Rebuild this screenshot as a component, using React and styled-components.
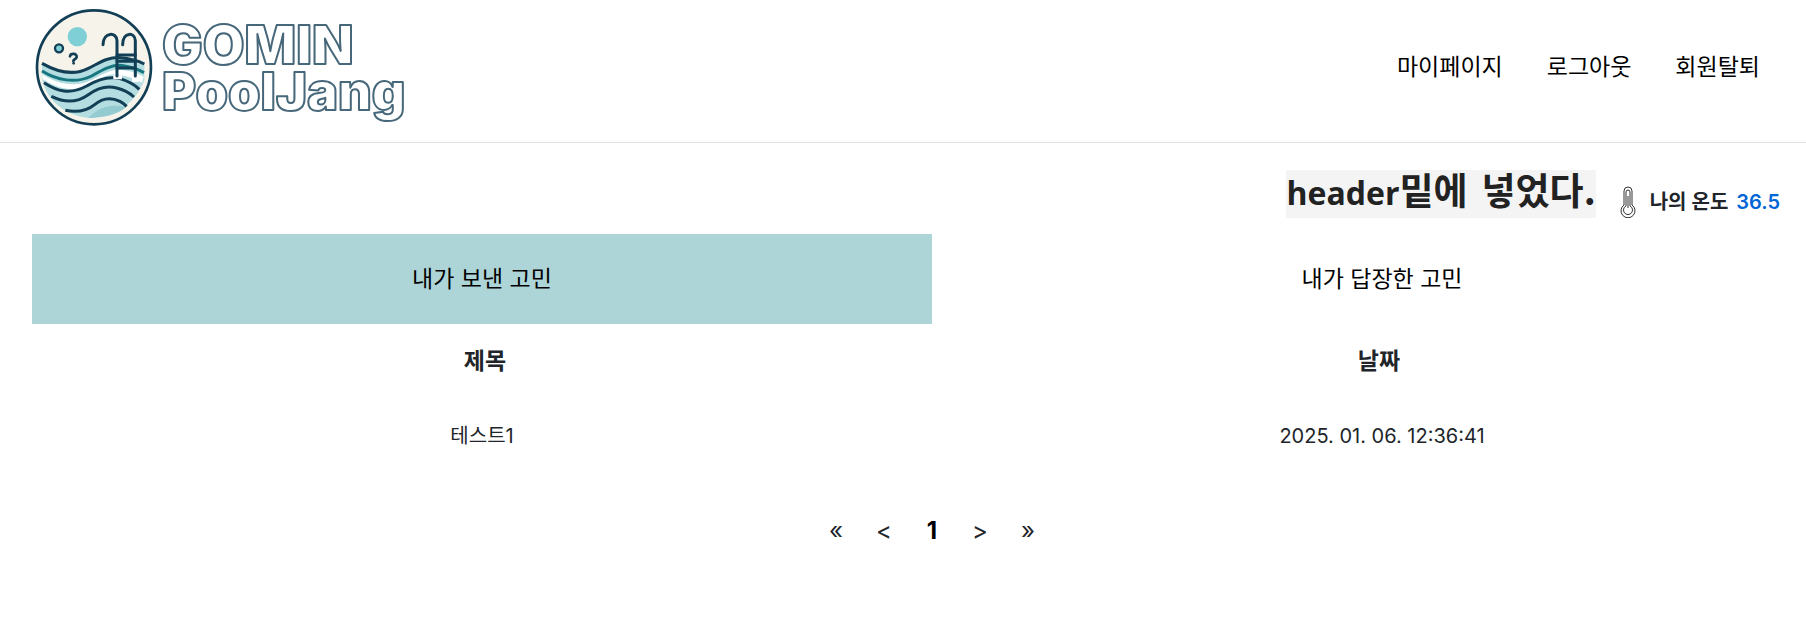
import React, { useState } from "react";
import styled, { createGlobalStyle } from "styled-components";

const colors = {
    navy: "#123f55",
    outline: "#47687a",
    teal: "#7fd0d6",
    paleTeal: "#b3dde0",
    cream: "#f6f3ea",
    tab: "#add5d7",
    text: "#212529",
    blue: "#0066d6",
    line: "#dee2e6",
};

const worries = [{ id: 1, title: "테스트1", date: "2025. 01. 06. 12:36:41" }];

const Logo = () => (
    <LogoSvg viewBox="32 8 390 126" role="img" aria-label="GOMIN PoolJang">
        <g transform="translate(20 0) scale(0.3333)" fill="none" strokeLinecap="round">
            <circle cx="222" cy="202" r="171" fill={colors.cream} stroke={colors.navy} strokeWidth="8" />
            <path
                d="M66 190C110 215 160 228 205 205C240 188 262 171 300 173C330 175 355 182 373 192L373 240C350 300 300 350 205 354C130 345 80 300 66 235Z"
                fill={colors.paleTeal}
            />
            <path
                d="M66 222C110 252 165 264 215 240C250 220 280 205 310 210C340 215 355 221 371 230L366 248C340 234 300 220 270 224C230 234 200 268 160 268C120 268 90 250 68 238Z"
                fill="#fff"
            />
            <path d="M205 354C225 335 240 322 275 318C295 316 310 320 318 322C290 345 250 354 205 354Z" fill="#93cbd1" />
            <g stroke={colors.navy} strokeWidth="9" strokeLinecap="butt">
                <path d="M66 190C110 215 160 228 205 205C240 188 262 171 300 173C330 175 355 182 373 192" />
                <path d="M66 213C110 240 165 252 215 228C250 208 280 192 310 197C340 202 355 208 372 218" stroke="#17767f" />
                <path d="M72 248C112 274 150 285 200 258C240 234 270 228 300 236C330 245 345 255 358 268" />
                <path d="M94 289C130 306 165 312 205 284C235 262 262 256 290 264C315 270 330 280 342 291" />
                <path d="M136 331C170 338 198 335 225 313C250 292 275 292 300 304C308 308 314 313 320 319" />
            </g>
            <path d="M280 226H306V238H280ZM336 230H356V246H336Z" fill="#fff" />
            <circle cx="172" cy="110" r="29" fill={colors.teal} />
            <circle cx="117" cy="145" r="12" fill={colors.teal} stroke={colors.navy} strokeWidth="7" />
            <path d="M150 169C152 159 171 159 170 171C169 179 159 177 160 184" stroke={colors.navy} strokeWidth="8" />
            <circle cx="161" cy="190" r="4" fill={colors.navy} />
            <g stroke={colors.navy} strokeWidth="9">
                <path d="M291 228V122C291 96 250 94 249 134" />
                <path d="M346 228V122C346 96 308 94 308 134" />
                <path d="M291 165H346M291 184H346M291 204H346" />
            </g>
        </g>
        <LogoText x="162" y="64" $size={54}>
            GOMIN
        </LogoText>
        <LogoText x="162" y="110" $size={52}>
            PoolJang
        </LogoText>
    </LogoSvg>
);

const Thermometer = () => (
    <ThermometerSvg viewBox="0 0 16 32" aria-hidden="true">
        <path d="M4 19V5a4 4 0 0 1 8 0v14a7 7 0 1 1-8 0Z" />
        <path d="M6 20V6a2 2 0 0 1 4 0v14a4.5 4.5 0 1 1-4 0Z" />
        <path d="M8 10v12" />
    </ThermometerSvg>
);

const App = () => {
    const [tab, setTab] = useState("sent");

    return (
        <>
            <GlobalStyle />
            <Header>
                <Logo />
                <Nav>
                    <NavLink href="#mypage">마이페이지</NavLink>
                    <NavLink href="#logout">로그아웃</NavLink>
                    <NavLink href="#leave">회원탈퇴</NavLink>
                </Nav>
            </Header>
            <StatusBar>
                <Notice>
                    <span>
                        <Latin>header</Latin>밑에
                    </span>
                    <span>넣었다.</span>
                </Notice>
                <Temperature>
                    <Thermometer />
                    <span>나의 온도</span>
                    <Degree>36.5</Degree>
                </Temperature>
            </StatusBar>
            <Main>
                <Tabs>
                    <Tab $active={tab === "sent"} onClick={() => setTab("sent")}>
                        내가 보낸 고민
                    </Tab>
                    <Tab $active={tab === "replied"} onClick={() => setTab("replied")}>
                        내가 답장한 고민
                    </Tab>
                </Tabs>
                <Table>
                    <thead>
                        <tr>
                            <Th>제목</Th>
                            <Th>날짜</Th>
                        </tr>
                    </thead>
                    <tbody>
                        {worries.map((worry) => (
                            <tr key={worry.id}>
                                <Td>{worry.title}</Td>
                                <Td>{worry.date}</Td>
                            </tr>
                        ))}
                    </tbody>
                </Table>
                <Pagination aria-label="pagination">
                    <PageButton>«</PageButton>
                    <PageButton>&lt;</PageButton>
                    <PageButton $current>1</PageButton>
                    <PageButton>&gt;</PageButton>
                    <PageButton>»</PageButton>
                </Pagination>
            </Main>
        </>
    );
};

export default App;

const GlobalStyle = createGlobalStyle`
    * {
        box-sizing: border-box;
    }
    body {
        margin: 0;
        overflow-x: hidden;
        background-color: white;
        color: ${colors.text};
        font-family: Inter, "Noto Sans CJK KR", sans-serif;
        font-size: 20px;
        line-height: 30px;
    }
    button {
        font-family: inherit;
        border: 0;
        cursor: pointer;
    }
`;

const Header = styled.header`
    display: flex;
    align-items: center;
    justify-content: space-between;
    padding: 8px 46px 8px 32px;
    border-bottom: 1px solid ${colors.line};
`;

const LogoSvg = styled.svg`
    display: block;
    width: 390px;
    height: 126px;
`;

const LogoText = styled.text`
    font-family: Inter, sans-serif;
    font-size: ${(props) => props.$size}px;
    font-weight: 900;
    fill: white;
    stroke: ${colors.outline};
    stroke-width: 2px;
    stroke-linejoin: round;
`;

const Nav = styled.nav`
    display: flex;
    gap: 44px;
    margin-bottom: 8px;
`;

const NavLink = styled.a`
    color: black;
    font-size: 23px;
    text-decoration: none;
`;

const StatusBar = styled.div`
    display: flex;
    justify-content: flex-end;
    align-items: flex-end;
    gap: 24px;
    padding: 27px 26px 16px;
`;

const Notice = styled.strong`
    display: flex;
    gap: 14px;
    padding-bottom: 10px;
    background-color: #f4f4f4;
    color: #222;
    font-family: "Noto Sans CJK KR", sans-serif;
    font-size: 37px;
    line-height: 38px;
`;

const Latin = styled.span`
    font-family: "Open Sans", sans-serif;
    font-size: 32px;
    line-height: 24px;
`;

const Temperature = styled.div`
    display: flex;
    align-items: center;
    gap: 8px;
    font-weight: 600;
`;

const ThermometerSvg = styled.svg`
    width: 16px;
    height: 32px;
    margin-right: 6px;
    fill: none;
    stroke: #333;
    stroke-width: 1;
`;

const Degree = styled.span`
    color: ${colors.blue};
`;

const Main = styled.main`
    margin: 0 -26px 0 32px;
`;

const Tabs = styled.div`
    display: grid;
    grid-template-columns: 1fr 1fr;
`;

const Tab = styled.button`
    padding: 28px;
    background-color: ${(props) => (props.$active ? colors.tab : "white")};
    color: black;
    font-size: 23px;
    line-height: 34px;
`;

const Table = styled.table`
    width: 100%;
    table-layout: fixed;
    border-collapse: collapse;
    text-align: center;
`;

const Th = styled.th`
    padding: 20px 0;
    font-size: 23px;
    line-height: 34px;
    &:first-child {
        padding-left: 6px;
    }
    &:last-child {
        padding-right: 6px;
    }
`;

const Td = styled.td`
    padding: 23px 0 22px;
`;

const Pagination = styled.nav`
    display: flex;
    justify-content: center;
    margin-top: 33px;
`;

const PageButton = styled.button`
    width: 48px;
    padding: 8px 0;
    background: none;
    color: ${(props) => (props.$current ? "black" : colors.text)};
    font-size: 24px;
    font-weight: ${(props) => (props.$current ? 700 : 400)};
    line-height: 34px;
`;
